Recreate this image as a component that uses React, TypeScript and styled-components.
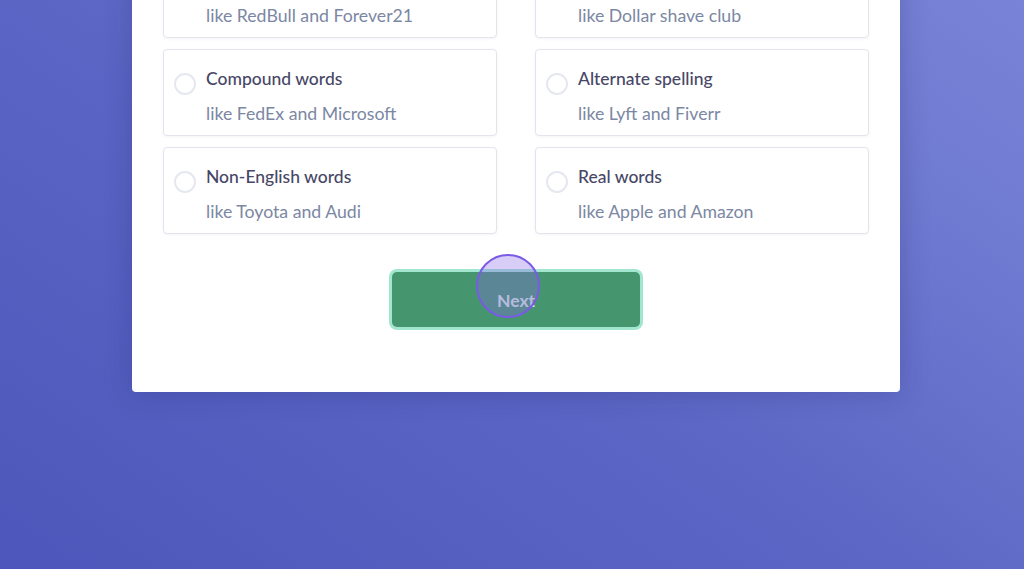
import React from "react";
import styled, { createGlobalStyle } from "styled-components";

const Global = createGlobalStyle`
  html, body { margin: 0; padding: 0; }
  body {
    width: 1024px;
    height: 569px;
    overflow: hidden;
    background: linear-gradient(35deg, #4d57bb 0%, #5a65c4 45%, #6f7ad1 80%, #7984d8 100%);
    font-family: "Lato", "Noto Sans", sans-serif;
  }
`;

const Page = styled.div`
  height: 569px;
  display: flex;
  justify-content: center;
  align-items: flex-start;
  padding-left: 8px;
  box-sizing: border-box;
`;

const Panel = styled.div`
  width: 768px;
  margin-top: -80px;
  background: #ffffff;
  border-radius: 4px;
  box-shadow: 0 0 28px rgba(30, 30, 90, 0.25);
  padding: 31px 31px 65px;
  box-sizing: border-box;
  display: flex;
  flex-direction: column;
  align-items: center;
`;

const Grid = styled.div`
  width: 100%;
  display: grid;
  grid-template-columns: 1fr 1fr;
  column-gap: 38px;
  row-gap: 11px;
`;

const Option = styled.label`
  height: 87px;
  box-sizing: border-box;
  border: 1px solid #e2e5ee;
  border-radius: 4px;
  box-shadow: 0 1px 3px rgba(60, 70, 110, 0.06);
  display: flex;
  align-items: flex-start;
  gap: 10px;
  padding: 16px 16px 10px 10px;
  cursor: pointer;
`;

const Radio = styled.span`
  flex: none;
  width: 22px;
  height: 22px;
  margin-top: 7px;
  border-radius: 50%;
  border: 2px solid #e6e8f0;
  box-sizing: border-box;
`;

const Texts = styled.div`
  display: flex;
  flex-direction: column;
`;

const Title = styled.div`
  font-size: 17.5px;
  line-height: 26px;
  font-weight: 500;
  color: #474766;
`;

const Sub = styled.div`
  margin-top: 9px;
  font-size: 17.7px;
  line-height: 26px;
  color: #7b87a3;
`;

const ButtonWrap = styled.div`
  position: relative;
  margin-top: 38px;
`;

const NextButton = styled.button`
  width: 248px;
  height: 55px;
  border: none;
  border-radius: 5px;
  background: #45966f;
  box-shadow: 0 0 0 3px #a2e6d0;
  color: rgba(255, 255, 255, 0.75);
  font-family: "Lato", "Noto Sans", sans-serif;
  font-size: 17.5px;
  font-weight: 700;
  padding-top: 2px;
  cursor: pointer;
`;

const Cursor = styled.span`
  position: absolute;
  left: 84px;
  top: -18px;
  width: 64px;
  height: 64px;
  border-radius: 50%;
  box-sizing: border-box;
  border: 2.5px solid #7b5ae8;
  background: rgba(133, 103, 230, 0.33);
  pointer-events: none;
`;

const options = [
  { title: "Abstract words", sub: "like RedBull and Forever21" },
  { title: "Blended words", sub: "like Dollar shave club" },
  { title: "Compound words", sub: "like FedEx and Microsoft" },
  { title: "Alternate spelling", sub: "like Lyft and Fiverr" },
  { title: "Non-English words", sub: "like Toyota and Audi" },
  { title: "Real words", sub: "like Apple and Amazon" },
];

export default function App() {
  return (
    <>
      <Global />
      <Page>
        <Panel>
          <Grid>
            {options.map((o) => (
              <Option key={o.title}>
                <Radio />
                <Texts>
                  <Title>{o.title}</Title>
                  <Sub>{o.sub}</Sub>
                </Texts>
              </Option>
            ))}
          </Grid>
          <ButtonWrap>
            <NextButton>Next</NextButton>
            <Cursor />
          </ButtonWrap>
        </Panel>
      </Page>
    </>
  );
}
